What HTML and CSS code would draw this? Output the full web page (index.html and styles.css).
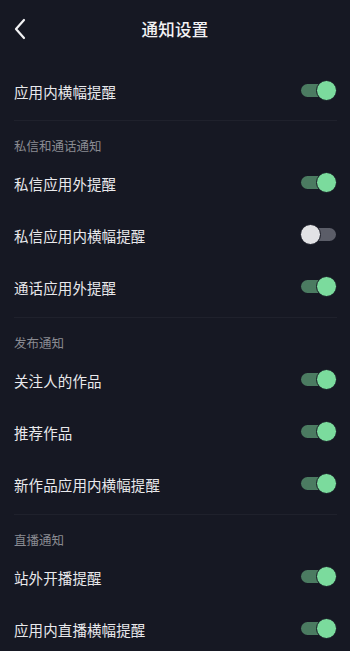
FILE: index.html
```html
<!DOCTYPE html>
<html lang="zh-CN">
<head>
    <meta charset="UTF-8">
    <meta name="viewport" content="width=device-width, initial-scale=1.0">
    <title>通知设置</title>
    <link rel="stylesheet" href="styles.css">
</head>
<body>
    <div class="header">
        <button class="back-btn" aria-label="返回">
            <svg width="14" height="22" viewBox="0 0 14 22">
                <path d="M11 2 L3 11 L11 20" fill="none" stroke="#f2f2f4" stroke-width="2.2" stroke-linecap="round" stroke-linejoin="round"/>
            </svg>
        </button>
        <h1 class="title">通知设置</h1>
    </div>

    <div class="group first">
        <div class="row">
            <span class="label">应用内横幅提醒</span>
            <span class="switch on"><span class="track"></span><span class="knob"></span></span>
        </div>
    </div>

    <div class="group">
        <div class="group-title">私信和通话通知</div>
        <div class="row">
            <span class="label">私信应用外提醒</span>
            <span class="switch on"><span class="track"></span><span class="knob"></span></span>
        </div>
        <div class="row">
            <span class="label">私信应用内横幅提醒</span>
            <span class="switch off"><span class="track"></span><span class="knob"></span></span>
        </div>
        <div class="row">
            <span class="label">通话应用外提醒</span>
            <span class="switch on"><span class="track"></span><span class="knob"></span></span>
        </div>
    </div>

    <div class="group">
        <div class="group-title">发布通知</div>
        <div class="row">
            <span class="label">关注人的作品</span>
            <span class="switch on"><span class="track"></span><span class="knob"></span></span>
        </div>
        <div class="row">
            <span class="label">推荐作品</span>
            <span class="switch on"><span class="track"></span><span class="knob"></span></span>
        </div>
        <div class="row">
            <span class="label">新作品应用内横幅提醒</span>
            <span class="switch on"><span class="track"></span><span class="knob"></span></span>
        </div>
    </div>

    <div class="group">
        <div class="group-title">直播通知</div>
        <div class="row">
            <span class="label">站外开播提醒</span>
            <span class="switch on"><span class="track"></span><span class="knob"></span></span>
        </div>
        <div class="row">
            <span class="label">应用内直播横幅提醒</span>
            <span class="switch on"><span class="track"></span><span class="knob"></span></span>
        </div>
    </div>
</body>
</html>
```

FILE: styles.css
```css
body {
    margin: 0;
    background-color: #161823;
    font-family: "Noto Sans CJK SC", "Noto Sans", sans-serif;
    color: #e9e9ec;
    overflow: hidden;
}

.header {
    position: relative;
    height: 58px;
    display: flex;
    align-items: center;
    justify-content: center;
}

.back-btn {
    position: absolute;
    left: 13px;
    top: 18px;
    padding: 0;
    border: none;
    background: none;
    display: flex;
}

.title {
    margin: 0;
    font-size: 16.5px;
    font-weight: 500;
    color: #f2f2f4;
    letter-spacing: 0.3px;
}

.group {
    margin: 0 13px 0 14px;
    padding-bottom: 4px;
    border-bottom: 1px solid #1f212c;
}

.group.first {
    margin-top: 7px;
    padding-bottom: 3px;
}

.group-title {
    padding-top: 16px;
    padding-bottom: 2px;
    height: 18px;
    line-height: 18px;
    font-size: 12.5px;
    color: #8a8b92;
}

.row {
    height: 52px;
    display: flex;
    align-items: center;
    justify-content: space-between;
}

.label {
    font-size: 14.5px;
    letter-spacing: 0.1px;
}

.switch {
    position: relative;
    width: 37px;
    height: 22px;
    display: inline-block;
}

.track {
    position: absolute;
    left: 1px;
    right: 3px;
    top: 4px;
    height: 13px;
    border-radius: 7px;
    background-color: #4b7b61;
}

.knob {
    position: absolute;
    top: 0;
    width: 19px;
    height: 19px;
    border-radius: 50%;
    border: 1px solid #161823;
}

.switch.on .knob {
    right: 0;
    background-color: #7bdb9d;
}

.switch.off .track {
    left: 3px;
    right: 1px;
    background-color: #5b5d68;
}

.switch.off .knob {
    left: 0;
    background-color: #e2e2e5;
}
```
